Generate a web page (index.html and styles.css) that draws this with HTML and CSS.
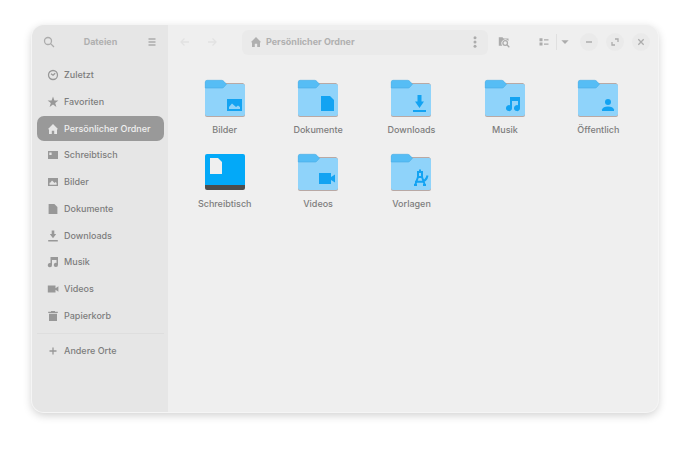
FILE: index.html
```html
<!DOCTYPE html>
<html lang="de">
<head>
    <meta charset="UTF-8">
    <meta name="viewport" content="width=device-width, initial-scale=1.0">
    <title>Persönlicher Ordner</title>
    <link rel="stylesheet" href="styles.css">
</head>
<body>
    <!-- shared symbols -->
    <svg class="symbols" aria-hidden="true">
        <symbol id="home" viewBox="0 0 12 12"><path d="M6 1 0.8 6.2H2V11H4.8V7.8H7.2V11H10V6.2H11.2Z"/></symbol>
        <symbol id="image" viewBox="0 0 12 12"><path fill-rule="evenodd" d="M1 2H11V10H1ZM2.5 8.7H9.6V7L8.6 6 7.6 7 5 4.6 3.5 6.4 2.5 6.8Z"/></symbol>
        <symbol id="document" viewBox="0 0 12 12"><path d="M1.6 1H7.4L10.4 4V11H1.6Z"/></symbol>
        <symbol id="download" viewBox="0 0 12 12"><path d="M4.7 0.6H7.3V4H9.2L6 8.2 2.8 4H4.7ZM1.2 10H10.8V11.4H1.2Z"/></symbol>
        <symbol id="music" viewBox="0 0 12 12"><path fill-rule="evenodd" d="M3.5 1H11V8.8A2.1 2.1 0 1 1 9.5 6.9V4H5V9A2.1 2.1 0 1 1 3.5 7.1Z"/></symbol>
        <symbol id="video" viewBox="0 0 12 12"><path d="M0.8 2.5H8.5V5.3L11.4 3.2V8.8L8.5 6.7V9.5H0.8Z"/></symbol>
        <symbol id="folder" viewBox="0 0 42 38">
            <path fill="#b9a9a5" d="M1 4H39Q41 5 41 7V36Q41 38 39 38H3Q1 38 1 36Z"/>
            <path fill="#8fd3fa" d="M1 3H20L22 5H39Q41 5 41 7V35Q41 37 39 37H3Q1 37 1 35Z"/>
            <path fill="#56bdf5" stroke="#46ade6" stroke-width=".6" d="M1.3 9V3Q1.3 1.3 3 1.3H17.5Q19 1.3 20 2.5L22.5 5.2 19.5 8.5Q19 9 18 9Z"/>
        </symbol>
    </svg>

    <div class="window">
        <aside class="sidebar">
            <header class="sidebar-header">
                <button class="tool" aria-label="Suchen"><svg class="icon line" viewBox="0 0 12 12"><circle cx="5" cy="5" r="3.5"/><path d="M7.6 7.6 11 11"/></svg></button>
                <h1>Dateien</h1>
                <button class="tool" aria-label="Menü"><svg class="icon line" viewBox="0 0 12 12"><path d="M2.5 3H9.5M2.5 6H9.5M2.5 9H9.5"/></svg></button>
            </header>
            <nav>
                <div class="places">
                    <a href="#"><svg class="icon line" viewBox="0 0 12 12"><circle cx="6" cy="6" r="4.5"/><path d="M4 4.8 6 6.2 8.2 4.2"/></svg>Zuletzt</a>
                    <a href="#"><svg class="icon" viewBox="0 0 12 12"><path d="M6 .6 7.4 4.5H11.4L8.2 6.9 9.4 11 6 8.6 2.6 11 3.8 6.9.6 4.5H4.6Z"/></svg>Favoriten</a>
                    <a href="#" class="active" aria-current="page"><svg class="icon"><use href="#home"/></svg>Persönlicher Ordner</a>
                    <a href="#"><svg class="icon" viewBox="0 0 12 12"><path fill-rule="evenodd" d="M1 2H11V10H1ZM2.3 3.4V6H4.6V3.4Z"/></svg>Schreibtisch</a>
                    <a href="#"><svg class="icon"><use href="#image"/></svg>Bilder</a>
                    <a href="#"><svg class="icon"><use href="#document"/></svg>Dokumente</a>
                    <a href="#"><svg class="icon"><use href="#download"/></svg>Downloads</a>
                    <a href="#"><svg class="icon"><use href="#music"/></svg>Musik</a>
                    <a href="#"><svg class="icon"><use href="#video"/></svg>Videos</a>
                    <a href="#"><svg class="icon" viewBox="0 0 12 12"><path d="M1.2 1.8H4V1H8V1.8H10.8V3H1.2ZM2 3.8H10V11H2Z"/></svg>Papierkorb</a>
                </div>
                <div class="places other">
                    <a href="#"><svg class="icon line" viewBox="0 0 12 12"><path d="M6 2.5V9.5M2.5 6H9.5"/></svg>Andere Orte</a>
                </div>
            </nav>
        </aside>

        <main class="content">
            <header class="toolbar">
                <div class="history">
                    <button class="tool" aria-label="Zurück" disabled><svg class="icon line" viewBox="0 0 12 12"><path d="M10 6H2M5.5 2.5 2 6 5.5 9.5"/></svg></button>
                    <button class="tool" aria-label="Vor" disabled><svg class="icon line" viewBox="0 0 12 12"><path d="M2 6H10M6.5 2.5 10 6 6.5 9.5"/></svg></button>
                </div>
                <div class="pathbar">
                    <svg class="icon"><use href="#home"/></svg>
                    <span>Persönlicher Ordner</span>
                    <button class="tool" aria-label="Ordnermenü"><svg class="icon" viewBox="0 0 12 12"><circle cx="6" cy="1.7" r="1.5"/><circle cx="6" cy="6" r="1.5"/><circle cx="6" cy="10.3" r="1.5"/></svg></button>
                </div>
                <button class="tool" aria-label="Ordner durchsuchen"><svg class="icon" viewBox="0 0 12 12"><path d="M.8 1.2H4.5L5.7 2.4H10.5V5A3.6 3.6 0 0 0 4.3 9.8H.8Z"/><circle class="ring" cx="7.2" cy="7" r="2.3"/><path class="ring" d="M9 8.8 11.3 11.2"/></svg></button>
                <div class="view">
                    <button class="tool" aria-label="Listenansicht"><svg class="icon" viewBox="0 0 12 12"><path d="M1.5 2.3H4.5V5.2H1.5ZM6 3.2H10.5V4.4H6ZM1.5 6.6H4.5V9.5H1.5ZM6 7.5H10.5V8.7H6Z"/></svg></button>
                    <button class="tool caret" aria-label="Ansichtsoptionen"><svg class="icon" viewBox="0 0 12 12"><path d="M2.4 4.3H9.6L6 8Z"/></svg></button>
                </div>
                <div class="controls">
                    <button class="tool round" aria-label="Minimieren"><svg class="icon line" viewBox="0 0 12 12"><path d="M3 6H9"/></svg></button>
                    <button class="tool round" aria-label="Maximieren"><svg class="icon line" viewBox="0 0 12 12"><path d="M6 3H9V6M3 6V9H6"/></svg></button>
                    <button class="tool round" aria-label="Schließen"><svg class="icon line" viewBox="0 0 12 12"><path d="M3.3 3.3 8.7 8.7M8.7 3.3 3.3 8.7"/></svg></button>
                </div>
            </header>

            <div class="files">
                <a href="#" class="file">
                    <svg class="folder" viewBox="0 0 42 38"><use href="#folder"/><path fill-rule="evenodd" d="M23 20H38V32H23ZM25 30H36V28L34 26.5 32 28 28 24.5 25 28Z"/></svg>
                    Bilder
                </a>
                <a href="#" class="file">
                    <svg class="folder" viewBox="0 0 42 38"><use href="#folder"/><path d="M24 17H33L37 21V32H24Z"/></svg>
                    Dokumente
                </a>
                <a href="#" class="file">
                    <svg class="folder" viewBox="0 0 42 38"><use href="#folder"/><path d="M27.5 16H31.5V22.5H34L29.5 29 25 22.5H27.5ZM23 31H36V33H23Z"/></svg>
                    Downloads
                </a>
                <a href="#" class="file">
                    <svg class="folder" viewBox="0 0 42 38"><use href="#folder"/><path d="M26 18H36V29A3 3 0 1 1 34 26.3V22H28V29A3 3 0 1 1 26 26.3Z"/></svg>
                    Musik
                </a>
                <a href="#" class="file">
                    <svg class="folder" viewBox="0 0 42 38"><use href="#folder"/><circle cx="31" cy="23" r="3"/><path d="M25 32V30.5Q26 27.5 31 27.5T37 30.5V32Z"/></svg>
                    Öffentlich
                </a>
                <a href="#" class="file">
                    <svg class="folder" viewBox="0 0 42 38"><path fill="#4d4d4d" d="M1 30H41V35Q41 37 39 37H3Q1 37 1 35Z"/><path fill="#03a9f8" d="M1 32V3Q1 1 3 1H39Q41 1 41 3V32Z"/><path fill="#efefef" d="M6 5H14L18 9V21H6Z"/></svg>
                    Schreibtisch
                </a>
                <a href="#" class="file">
                    <svg class="folder" viewBox="0 0 42 38"><use href="#folder"/><path d="M22 20H34V24L38 21.5V29.5L34 27V31H22Z"/></svg>
                    Videos
                </a>
                <a href="#" class="file">
                    <svg class="folder" viewBox="0 0 42 38"><use href="#folder"/><path class="compass" d="M30 16.5V19M28 19H32V24H28ZM28 24 25 32.5M32 24 35 32.5M25 28.8H31Q36.5 28 37.5 22.5M24 32H27M33 32H36"/></svg>
                    Vorlagen
                </a>
            </div>
        </main>
    </div>
</body>
</html>
```
FILE: styles.css
```css
* {
    box-sizing: border-box;
}
body {
    margin: 0;
    padding: 25px 32px 39px;
    background: #fff;
    color: #7d7d7d;
    font-family: Inter, sans-serif;
    font-size: 9px;
    font-weight: 500;
    line-height: 12px;
}
a {
    color: inherit;
    text-decoration: none;
}
.symbols {
    display: none;
}
.window {
    display: flex;
    min-height: calc(100vh - 64px);
    border-radius: 12px;
    background: #efefef;
    box-shadow: 0 0 0 1px #f5f5f5, 0 3px 10px rgba(0, 0, 0, 0.2);
    overflow: hidden;
}
.icon {
    display: block;
    flex: none;
    width: 12px;
    height: 12px;
    fill: currentColor;
}
.line,
.ring {
    fill: none;
    stroke: currentColor;
    stroke-width: 1.3;
}
.tool {
    display: flex;
    align-items: center;
    justify-content: center;
    width: 18px;
    height: 18px;
    padding: 0;
    border: none;
    border-radius: 9px;
    background: none;
    color: #acacac;
}

/* sidebar */
.sidebar {
    flex: none;
    width: 136px;
    background: #e6e6e6;
}
.sidebar-header {
    display: flex;
    align-items: center;
    justify-content: space-between;
    height: 34px;
    padding: 0 7px 0 8px;
}
.sidebar-header h1 {
    margin: 0;
    color: #b0b0b0;
    font-size: 9px;
    font-weight: 700;
}
.places {
    display: grid;
    grid-auto-rows: 1fr;
    gap: 2px;
    height: 265px;
    margin: 4px 4px 0 5px;
}
.places a {
    display: flex;
    align-items: center;
    gap: 5px;
    padding-left: 10px;
    border-radius: 7px;
}
.places .icon {
    color: #989898;
}
.places .active {
    background: #999;
    color: #f0f0f0;
}
.places .active .icon {
    color: #e6e6e6;
}
.other {
    height: auto;
    margin-top: 5px;
    padding-top: 11px;
    border-top: 1px solid #dedede;
}

/* toolbar */
.content {
    flex: 1;
    min-width: 0;
}
.toolbar {
    display: flex;
    align-items: center;
    height: 34px;
    padding: 0 8px;
}
.history {
    display: flex;
    gap: 9px;
    margin-right: 21px;
}
.history .tool {
    color: #e2e2e2;
}
.pathbar {
    display: flex;
    flex: 1;
    align-items: center;
    gap: 4px;
    height: 25px;
    margin-right: 7px;
    padding: 0 4px 0 8px;
    border-radius: 6px;
    background: #eaeaea;
    color: #b0b0b0;
    font-weight: 700;
}
.pathbar .tool {
    margin-left: auto;
}
.view {
    display: flex;
    align-items: center;
    margin: 0 7px 0 22px;
}
.view .tool + .tool {
    margin-left: 3px;
}
.view .caret {
    width: 17px;
    height: 16px;
    border-left: 1px solid #e0e0e0;
    border-radius: 0;
}
.controls {
    display: flex;
    gap: 8px;
}
.round {
    background: #eaeaea;
}

/* folder grid */
.files {
    display: grid;
    grid-template-columns: repeat(5, 1fr);
    row-gap: 17px;
    padding: 20px 13px 0 10px;
}
.file {
    display: flex;
    flex-direction: column;
    align-items: center;
    gap: 7px;
}
.folder {
    width: 42px;
    height: 38px;
    fill: #13a3f2;
}
.compass {
    fill: none;
    stroke: #13a3f2;
    stroke-width: 2;
}
```
